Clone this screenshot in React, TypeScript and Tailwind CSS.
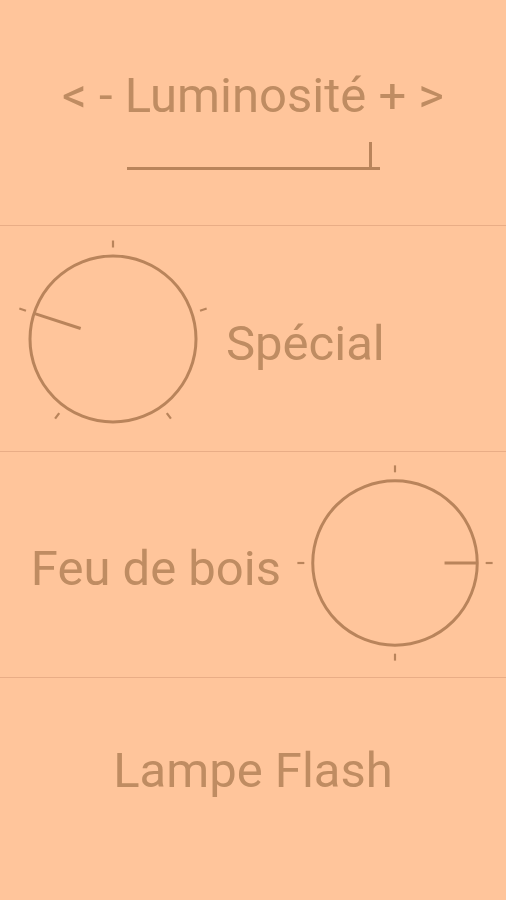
import React from "react";

const STROKE = "#b9845b";

function Knob({ ticks, angle, inner }: { ticks: number[]; angle: number; inner: number }) {
  const c = 112;
  const R = 83;
  const pt = (a: number, r: number) => {
    const rad = (a * Math.PI) / 180;
    return [c + r * Math.sin(rad), c - r * Math.cos(rad)];
  };
  const [px1, py1] = pt(angle, inner);
  const [px2, py2] = pt(angle, R);
  return (
    <svg width="224" height="224" viewBox="0 0 224 224">
      <circle cx={c} cy={c} r={R} fill="none" stroke={STROKE} strokeWidth="3" />
      {ticks.map((t) => {
        const [x1, y1] = pt(t, 91.5);
        const [x2, y2] = pt(t, 98.5);
        return <line key={t} x1={x1} y1={y1} x2={x2} y2={y2} stroke={STROKE} strokeWidth="2.2" />;
      })}
      <line x1={px1} y1={py1} x2={px2} y2={py2} stroke={STROKE} strokeWidth="3" />
    </svg>
  );
}

export default function App() {
  return (
    <div
      className="w-[506px] h-[900px] bg-[#ffc59b] text-[#bf8c62] font-normal overflow-hidden flex flex-col"
      style={{ fontFamily: "Roboto, 'Noto Sans', sans-serif" }}
    >
      <div className="h-[226px] shrink-0 border-b border-[#e9ad86] flex flex-col items-center justify-start pt-[67px]">
        <div className="text-[49px] leading-[58px] whitespace-nowrap">&lt; - Luminosité + &gt;</div>
        <div className="relative w-[253px] h-[3px] bg-[#b9845b] mt-[42px]">
          <div className="absolute left-[242px] bottom-0 w-[3px] h-[28px] bg-[#b9845b]" />
        </div>
      </div>
      <div className="h-[226px] shrink-0 border-b border-[#e9ad86] flex flex-row items-center">
        <div className="w-[226px] flex items-center justify-center">
          <Knob ticks={[0, 72, 144, -72, -144]} angle={-72} inner={34} />
        </div>
        <div className="text-[49px] leading-[58px] whitespace-nowrap mt-[10px]">Spécial</div>
      </div>
      <div className="h-[226px] shrink-0 border-b border-[#e9ad86] flex flex-row items-center justify-end">
        <div className="text-[49px] leading-[58px] whitespace-nowrap mt-[8px] mr-[3px]">Feu de bois</div>
        <div className="w-[222px] flex items-center justify-center mb-[3px]">
          <Knob ticks={[0, 90, 180, 270]} angle={90} inner={50} />
        </div>
      </div>
      <div className="flex-1 flex flex-col items-center justify-start pt-[64px]">
        <div className="text-[49px] leading-[58px] whitespace-nowrap">Lampe Flash</div>
      </div>
    </div>
  );
}
